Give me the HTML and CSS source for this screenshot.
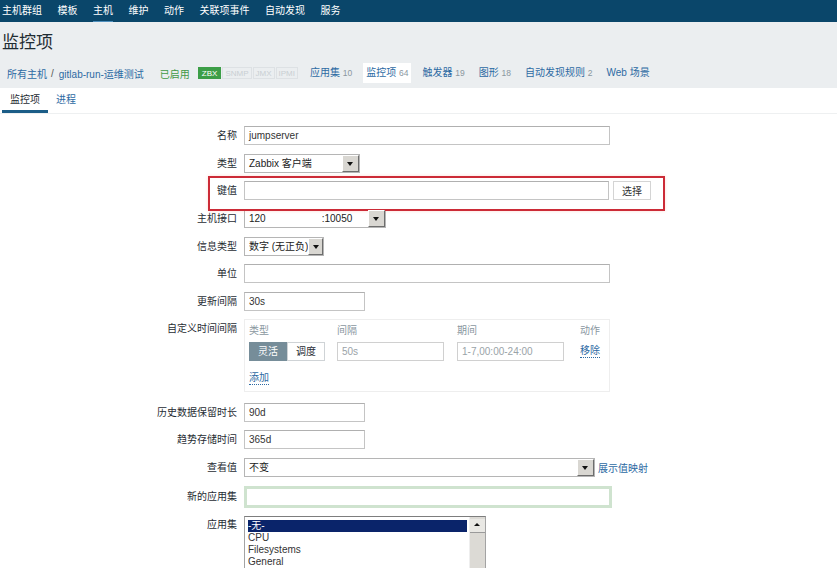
FILE: index.html
```html
<!DOCTYPE html>
<html lang="zh">
<head>
   <meta charset="UTF-8">
   <title>监控项</title>
   <link rel="stylesheet" href="styles.css">
</head>
<body>
<div class="topnav">
   <a href="#">主机群组</a>
   <a href="#">模板</a>
   <a href="#" class="active">主机</a>
   <a href="#">维护</a>
   <a href="#">动作</a>
   <a href="#">关联项事件</a>
   <a href="#">自动发现</a>
   <a href="#">服务</a>
</div>

<div class="header">
   <h1 class="page-title">监控项</h1>
   <div class="host-nav">
      <a href="#" class="link">所有主机</a>
      <span class="sep">/</span>
      <a href="#" class="link">gitlab-run-运维测试</a>
      <span class="status">已启用</span>
      <span class="badges">
         <span class="badge on">ZBX</span>
         <span class="badge">SNMP</span>
         <span class="badge">JMX</span>
         <span class="badge">IPMI</span>
      </span>
      <a href="#" class="host-tab">应用集 <span class="count">10</span></a>
      <span class="host-tab current">监控项 <span class="count">64</span></span>
      <a href="#" class="host-tab">触发器 <span class="count">19</span></a>
      <a href="#" class="host-tab">图形 <span class="count">18</span></a>
      <a href="#" class="host-tab">自动发现规则 <span class="count">2</span></a>
      <a href="#" class="host-tab">Web 场景</a>
   </div>
</div>

<div class="tabs">
   <span class="tab active">监控项</span>
   <a href="#" class="tab">进程</a>
</div>

<div class="form">
   <div class="form-row">
      <label>名称</label>
      <div class="input w-full">jumpserver</div>
   </div>
   <div class="form-row">
      <label>类型</label>
      <div class="select w-type"><span class="select-text">Zabbix 客户端</span><span class="select-btn"></span></div>
   </div>
   <div class="form-row key-row">
      <label>键值</label>
      <div class="field-line">
         <div class="input w-key"></div>
         <button class="btn">选择</button>
      </div>
   </div>
   <div class="form-row">
      <label>主机接口</label>
      <div class="select w-iface"><span class="select-text">120<span class="blur"></span>:10050</span><span class="select-btn"></span></div>
   </div>
   <div class="form-row">
      <label>信息类型</label>
      <div class="select w-info"><span class="select-text">数字 (无正负)</span><span class="select-btn"></span></div>
   </div>
   <div class="form-row">
      <label>单位</label>
      <div class="input w-full"></div>
   </div>
   <div class="form-row">
      <label>更新间隔</label>
      <div class="input w-short">30s</div>
   </div>
   <div class="form-row interval-row">
      <label>自定义时间间隔</label>
      <div class="interval-box">
         <div class="interval-grid">
            <span class="col-head">类型</span>
            <span class="col-head">间隔</span>
            <span class="col-head">期间</span>
            <span class="col-head">动作</span>
            <span class="segment"><span class="seg active">灵活</span><span class="seg">调度</span></span>
            <span class="input w-int muted">50s</span>
            <span class="input w-int muted">1-7,00:00-24:00</span>
            <a href="#" class="dotted">移除</a>
         </div>
         <a href="#" class="dotted add">添加</a>
      </div>
   </div>
   <div class="form-row">
      <label>历史数据保留时长</label>
      <div class="input w-short">90d</div>
   </div>
   <div class="form-row">
      <label>趋势存储时间</label>
      <div class="input w-short">365d</div>
   </div>
   <div class="form-row">
      <label>查看值</label>
      <div class="field-line">
         <div class="select w-view"><span class="select-text">不变</span><span class="select-btn"></span></div>
         <a href="#" class="link map-link">展示值映射</a>
      </div>
   </div>
   <div class="form-row">
      <label>新的应用集</label>
      <div class="input focus"></div>
   </div>
   <div class="form-row list-row">
      <label>应用集</label>
      <div class="listbox">
         <ul class="options">
            <li class="selected">-无-</li>
            <li>CPU</li>
            <li>Filesystems</li>
            <li>General</li>
         </ul>
         <div class="scrollbar"><span class="scroll-up"></span></div>
      </div>
   </div>
</div>
</body>
</html>
```

FILE: styles.css
```css
body {
   font: 10px "Liberation Sans", "Noto Sans CJK SC", sans-serif;
   color: #1f2c33;
   margin: 0;
   padding: 0;
   background: #fff;
}

a {
   text-decoration: none;
}

.topnav {
   display: flex;
   gap: 15.5px;
   height: 22px;
   padding-left: 2px;
   background-color: #0a466a;
}

.topnav a {
   color: #fff;
   line-height: 21px;
   border-bottom: 1px solid transparent;
}

.topnav a.active {
   border-bottom-color: #4f8fbd;
}

.header {
   background-color: #ebeef0;
}

.page-title {
   margin: 0;
   padding-left: 2px;
   height: 36px;
   line-height: 42px;
   font-size: 17px;
   font-weight: normal;
   color: #1f2c33;
}

.host-nav {
   display: flex;
   align-items: center;
   height: 30px;
   padding-left: 7px;
}

.link {
   color: #2d6aa3;
}

.sep {
   color: #555;
   margin: 0 5px 0 4px;
}

.status {
   color: #3f9a45;
   margin-left: 16px;
}

.badges {
   display: flex;
   margin-left: 8px;
}

.badge {
   height: 12px;
   line-height: 11px;
   padding: 0 2px;
   margin-right: 1px;
   font-size: 8px;
   color: #c9cfd3;
   border: 1px solid #dde1e4;
   box-sizing: border-box;
}

.badge.on {
   background-color: #3c9e47;
   border-color: #3c9e47;
   color: #fff;
   padding: 0 3px;
}

.host-tab {
   color: #2d6aa3;
   padding: 4px 3px;
   margin-left: 8px;
   line-height: 12px;
}

.host-tab.current {
   background-color: #fff;
   color: #2d6aa3;
}

.count {
   font-size: 8.5px;
   color: #8a979f;
}

.tabs {
   display: flex;
   height: 25px;
   padding-left: 2px;
   border-bottom: 1px solid #eef0f1;
}

.tab {
   padding: 0 8px;
   line-height: 24px;
   height: 22px;
   color: #2d6aa3;
   border-bottom: 3px solid transparent;
}

.tab.active {
   color: #1f2c33;
   border-bottom-color: #1b5d87;
}

.form {
   display: flex;
   flex-direction: column;
   gap: 8.7px;
   padding-top: 12px;
}

.form-row {
   display: grid;
   grid-template-columns: 237px auto;
   column-gap: 7px;
   align-items: center;
   justify-items: start;
}

.form-row label {
   justify-self: end;
   line-height: 19px;
}

.input {
   box-sizing: border-box;
   height: 19px;
   line-height: 17px;
   padding-left: 4px;
   border: 1px solid #c4c4c4;
   border-top-color: #b0b0b0;
   background: #fff;
   color: #333;
   white-space: nowrap;
   overflow: hidden;
}

.w-full {
   width: 366px;
}

.w-key {
   width: 365px;
}

.w-short {
   width: 121px;
}

.w-int {
   width: 107px;
}

.muted {
   color: #9aa3a8;
   border-color: #d0d0d0;
}

.input.focus {
   width: 368px;
   height: 22px;
   border: 3px solid #cfe3cf;
}

.field-line {
   display: flex;
   align-items: center;
   gap: 4px;
}

.btn {
   height: 19px;
   width: 38px;
   padding: 0;
   font: inherit;
   color: #333;
   background: #fff;
   border: 1px solid #d4d4d4;
}

.key-row {
   position: relative;
}

.key-row::after {
   content: "";
   position: absolute;
   left: 208px;
   top: -5px;
   width: 457px;
   height: 35px;
   box-sizing: border-box;
   border: 2px solid #cc2b37;
   box-shadow: 0 0 3px rgba(255, 120, 90, 0.25);
}

.select {
   display: flex;
   box-sizing: border-box;
   height: 19px;
   border: 1px solid #b5b5b5;
   background: #fff;
}

.select-text {
   flex: 1;
   padding-left: 4px;
   line-height: 17px;
   color: #222;
   white-space: nowrap;
}

.select-btn {
   position: relative;
   width: 15px;
   border: 1px solid #fff;
   border-right-color: #6d6d6d;
   border-bottom-color: #6d6d6d;
   background: #d9d7d2;
}

.select-btn::after {
   content: "";
   position: absolute;
   left: 4px;
   top: 6px;
   border-left: 3.5px solid transparent;
   border-right: 3.5px solid transparent;
   border-top: 4px solid #111;
}

.w-type {
   width: 116px;
}

.w-iface {
   width: 142px;
}

.w-info {
   width: 80px;
}

.w-view {
   width: 351px;
}

.blur {
   display: inline-block;
   width: 56px;
}

.map-link {
   margin-left: -1px;
}

.interval-row {
   align-items: start;
   margin-top: -1px;
   margin-bottom: 2px;
}

.interval-box {
   box-sizing: border-box;
   width: 366px;
   height: 73px;
   padding: 5px 4px 0;
   border: 1px solid #eeeeee;
}

.interval-grid {
   display: grid;
   grid-template-columns: 88px 120px 123px auto;
   row-gap: 5px;
   align-items: center;
   justify-items: start;
}

.col-head {
   color: #8a979f;
   line-height: 12px;
}

.segment {
   display: flex;
}

.seg {
   box-sizing: border-box;
   width: 38px;
   height: 19px;
   line-height: 17px;
   text-align: center;
   border: 1px solid #cfd3d6;
   color: #1f2c33;
}

.seg.active {
   background-color: #768d99;
   border-color: #768d99;
   color: #fff;
}

.dotted {
   color: #2d6aa3;
   border-bottom: 1px dotted #2d6aa3;
   line-height: 12px;
}

.add {
   display: inline-block;
   margin-top: 11px;
}

.list-row {
   align-items: start;
}

.list-row label {
   line-height: 18px;
}

.listbox {
   display: flex;
   width: 242px;
   height: 70px;
   box-sizing: border-box;
   border: 1px solid #a3a3a3;
   border-top-color: #7d7d7d;
   background: #fff;
}

.options {
   flex: 1;
   list-style: none;
   margin: 0;
   padding: 3px 2px 0 3px;
}

.options li {
   line-height: 12px;
   color: #333;
}

.options li.selected {
   background-color: #0a246a;
   color: #fff;
}

.scrollbar {
   width: 15px;
   background: #dcdad5;
   border-left: 1px solid #eee;
}

.scroll-up {
   display: block;
   position: relative;
   height: 13px;
   margin-top: 2px;
   background: #e9e8e4;
   border-bottom: 1px solid #9a9a9a;
}

.scroll-up::after {
   content: "";
   position: absolute;
   left: 4px;
   top: 4px;
   border-left: 3px solid transparent;
   border-right: 3px solid transparent;
   border-bottom: 3px solid #111;
}
```
